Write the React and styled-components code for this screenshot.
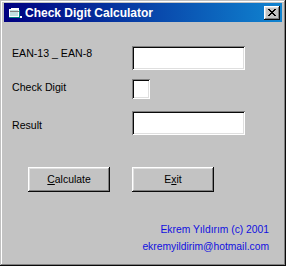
import React from "react";
import styled, { createGlobalStyle } from "styled-components";

const Global = createGlobalStyle`
  html, body { margin: 0; padding: 0; background: #c0c0c0; }
  body { font-family: "Liberation Sans", Arial, sans-serif; }
  * { box-sizing: border-box; }
`;

const Window = styled.div`
  width: 286px;
  height: 266px;
  background: #c3c3c3;
  padding: 3px 4px 4px 4px;
  box-shadow: inset -1px -1px #0a0a0a, inset 1px 1px #c0c0c0,
    inset -2px -2px #808080, inset 2px 2px #ffffff;
  display: flex;
  flex-direction: column;
`;

const TitleBar = styled.div`
  height: 19px;
  background: linear-gradient(90deg, #000080, #1084d0);
  display: flex;
  align-items: center;
  padding: 0 2px 0 3px;
  gap: 2px;
`;

const Title = styled.span`
  flex: 1;
  color: #ffffff;
  font-weight: bold;
  font-size: 12px;
  line-height: 14px;
  white-space: nowrap;
`;

const CloseButton = styled.div`
  width: 16px;
  height: 14px;
  background: #c3c3c3;
  box-shadow: inset -1px -1px #0a0a0a, inset 1px 1px #ffffff,
    inset -2px -2px #808080, inset 2px 2px #dfdfdf;
  display: flex;
  align-items: center;
  justify-content: center;
`;

const Body = styled.div`
  flex: 1;
  display: flex;
  flex-direction: column;
  padding: 24px 13px 0 8px;
`;

const Row = styled.div`
  display: flex;
  align-items: flex-start;
  margin-top: ${(p) => p.$gap || 0}px;
`;

const Label = styled.div`
  width: 120px;
  font-size: 10.6px;
  line-height: 12px;
  color: #000;
  padding-top: ${(p) => p.$offset || 0}px;
`;

const Field = styled.div`
  width: ${(p) => p.$w}px;
  height: ${(p) => p.$h}px;
  background: #ffffff;
  box-shadow: inset 1px 1px #808080, inset -1px -1px #ffffff,
    inset 2px 2px #0a0a0a, inset -2px -2px #dfdfdf;
`;

const ButtonRow = styled.div`
  display: flex;
  gap: 22px;
  margin-top: 32px;
  padding-left: 16px;
`;

const Button = styled.button`
  width: 82px;
  height: 25px;
  border: none;
  padding: 0;
  background: #c3c3c3;
  font-family: "Liberation Sans", Arial, sans-serif;
  font-size: 10.4px;
  color: #000;
  box-shadow: inset -1px -1px #0a0a0a, inset 1px 1px #ffffff,
    inset -2px -2px #808080, inset 2px 2px #dfdfdf;
  display: flex;
  align-items: center;
  justify-content: center;
  u { text-decoration: underline; text-underline-offset: 1px; }
`;

const Credits = styled.div`
  margin-top: 29px;
  text-align: right;
  color: #1010e0;
  font-size: 10.3px;
  line-height: 17px;
`;

const AppIcon = () => (
  <svg width="16" height="16" viewBox="0 0 16 16" shapeRendering="crispEdges">
    <rect x="2" y="4" width="10" height="8" fill="#ffffff" />
    <rect x="3" y="5" width="8" height="6" fill="#c0e0e0" />
    <rect x="4" y="3" width="8" height="2" fill="#ffffff" />
    <rect x="3" y="6" width="9" height="1" fill="#808080" />
    <rect x="12" y="5" width="1" height="7" fill="#008080" />
    <rect x="2" y="12" width="11" height="1" fill="#008080" />
    <rect x="13" y="11" width="2" height="2" fill="#ffffff" />
  </svg>
);

const CloseGlyph = () => (
  <svg width="8" height="7" viewBox="0 0 8 7" shapeRendering="crispEdges">
    <path
      d="M0 0h2v1H0zM6 0h2v1H6zM1 1h2v1H1zM5 1h2v1H5zM2 2h4v1H2zM3 3h2v1H3zM2 4h4v1H2zM1 5h2v1H1zM5 5h2v1H5zM0 6h2v1H0zM6 6h2v1H6z"
      fill="#000"
    />
  </svg>
);

export default function App() {
  return (
    <>
      <Global />
      <Window>
        <TitleBar>
          <AppIcon />
          <Title>Check Digit Calculator</Title>
          <CloseButton>
            <CloseGlyph />
          </CloseButton>
        </TitleBar>
        <Body>
          <Row>
            <Label $offset={1}>EAN-13 _ EAN-8</Label>
            <Field $w={113} $h={24} />
          </Row>
          <Row $gap={9}>
            <Label $offset={2}>Check Digit</Label>
            <Field $w={18} $h={20} />
          </Row>
          <Row $gap={12}>
            <Label $offset={8}>Result</Label>
            <Field $w={113} $h={24} />
          </Row>
          <ButtonRow>
            <Button>
              <span>
                <u>C</u>alculate
              </span>
            </Button>
            <Button>
              <span>
                E<u>x</u>it
              </span>
            </Button>
          </ButtonRow>
          <Credits>
            Ekrem Yıldırım (c) 2001
            <br />
            ekremyildirim@hotmail.com
          </Credits>
        </Body>
      </Window>
    </>
  );
}
